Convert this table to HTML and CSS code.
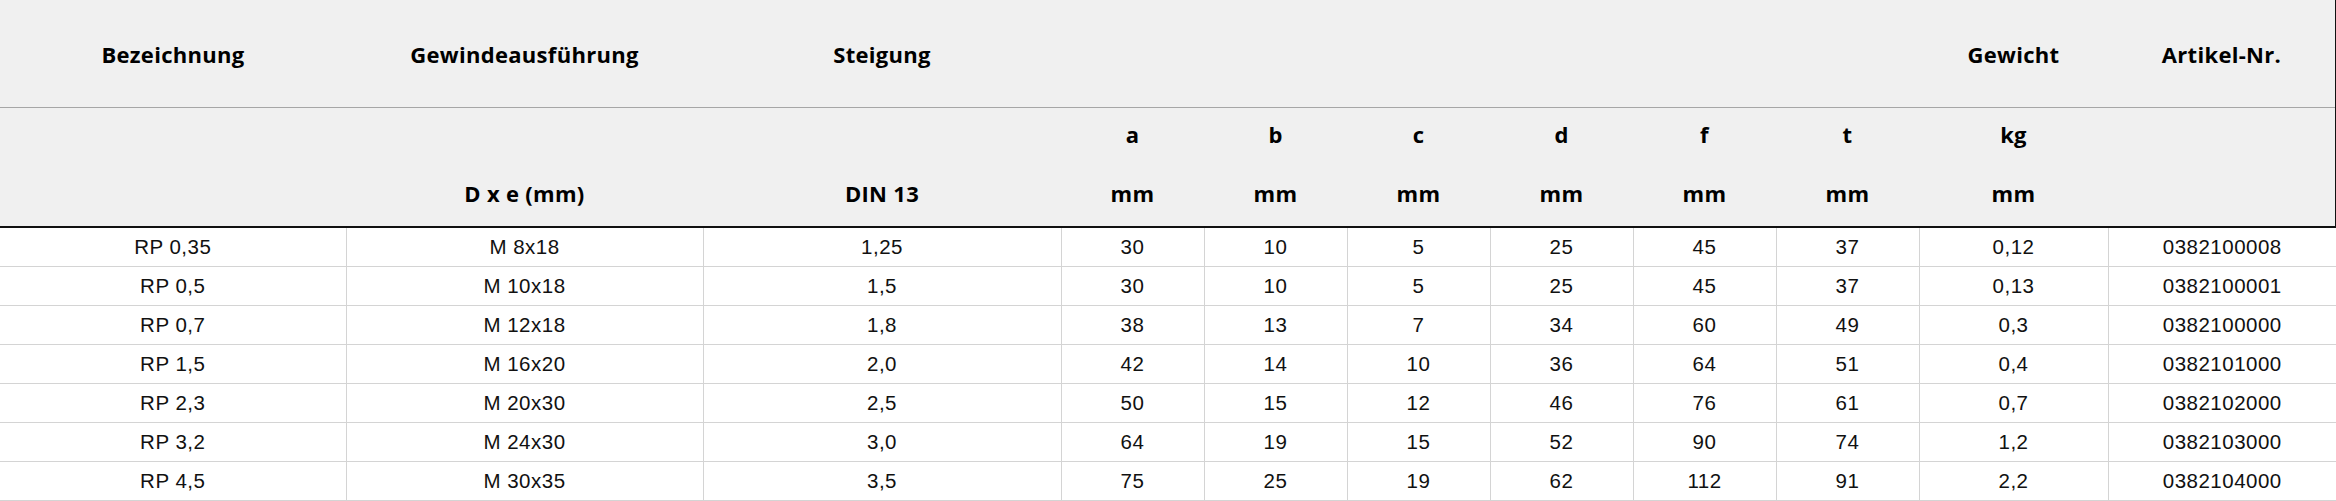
FILE: index.html
```html
<!DOCTYPE html>
<html lang="de">
<head>
<meta charset="utf-8">
<title>Tabelle</title>
<link rel="stylesheet" href="styles.css">
</head>
<body>
<table class="spec">
  <colgroup>
    <col class="c-bez"><col class="c-gew"><col class="c-st">
    <col class="c-d"><col class="c-d"><col class="c-d"><col class="c-d"><col class="c-d"><col class="c-d">
    <col class="c-kg"><col class="c-art">
  </colgroup>
  <thead>
    <tr class="h1">
      <th>Bezeichnung</th><th>Gewindeausführung</th><th>Steigung</th>
      <th></th><th></th><th></th><th></th><th></th><th></th>
      <th>Gewicht</th><th class="last">Artikel-Nr.</th>
    </tr>
    <tr class="h2">
      <th></th><th></th><th></th>
      <th>a</th><th>b</th><th>c</th><th>d</th><th>f</th><th>t</th>
      <th>kg</th><th class="last"></th>
    </tr>
    <tr class="h3">
      <th></th><th>D x e (mm)</th><th>DIN 13</th>
      <th>mm</th><th>mm</th><th>mm</th><th>mm</th><th>mm</th><th>mm</th>
      <th>mm</th><th class="last"></th>
    </tr>
  </thead>
  <tbody>
    <tr><td>RP 0,35</td><td>M 8x18</td><td>1,25</td><td>30</td><td>10</td><td>5</td><td>25</td><td>45</td><td>37</td><td>0,12</td><td>0382100008</td></tr>
    <tr><td>RP 0,5</td><td>M 10x18</td><td>1,5</td><td>30</td><td>10</td><td>5</td><td>25</td><td>45</td><td>37</td><td>0,13</td><td>0382100001</td></tr>
    <tr><td>RP 0,7</td><td>M 12x18</td><td>1,8</td><td>38</td><td>13</td><td>7</td><td>34</td><td>60</td><td>49</td><td>0,3</td><td>0382100000</td></tr>
    <tr><td>RP 1,5</td><td>M 16x20</td><td>2,0</td><td>42</td><td>14</td><td>10</td><td>36</td><td>64</td><td>51</td><td>0,4</td><td>0382101000</td></tr>
    <tr><td>RP 2,3</td><td>M 20x30</td><td>2,5</td><td>50</td><td>15</td><td>12</td><td>46</td><td>76</td><td>61</td><td>0,7</td><td>0382102000</td></tr>
    <tr><td>RP 3,2</td><td>M 24x30</td><td>3,0</td><td>64</td><td>19</td><td>15</td><td>52</td><td>90</td><td>74</td><td>1,2</td><td>0382103000</td></tr>
    <tr><td>RP 4,5</td><td>M 30x35</td><td>3,5</td><td>75</td><td>25</td><td>19</td><td>62</td><td>112</td><td>91</td><td>2,2</td><td>0382104000</td></tr>
  </tbody>
</table>
</body>
</html>
```
FILE: styles.css
```css
html, body {
  margin: 0;
  padding: 0;
  background: #ffffff;
}

.spec {
  width: 2336px;
  table-layout: fixed;
  border-collapse: collapse;
  border-spacing: 0;
}

.c-bez { width: 346px; }
.c-gew { width: 357px; }
.c-st  { width: 358px; }
.c-d   { width: 143px; }
.c-kg  { width: 189px; }
.c-art { width: 228px; }

.spec th {
  background: #f0f0f0;
  font-family: "Open Sans", "Liberation Sans", sans-serif;
  font-weight: 700;
  font-size: 22px;
  letter-spacing: 0.3px;
  color: #000;
  text-align: center;
  vertical-align: middle;
  padding: 0;
  white-space: nowrap;
}

.spec th.last {
  border-right: 2px solid #111;
}

.spec .h1 th {
  height: 107px;
  border-bottom: 1px solid #a6a6a6;
}

.spec .h2 th {
  height: 52px;
}

.spec .h3 th {
  height: 66px;
  border-bottom: 2px solid #111;
}

.spec td {
  height: 38px;
  padding: 0;
  font-family: "Liberation Sans", Arial, sans-serif;
  font-size: 20.5px;
  letter-spacing: 0.5px;
  color: #111;
  text-align: center;
  vertical-align: middle;
  border-right: 1px solid #d4d4d4;
  border-bottom: 1px solid #d4d4d4;
  white-space: nowrap;
}

.spec td:last-child {
  border-right: none;
}
```
